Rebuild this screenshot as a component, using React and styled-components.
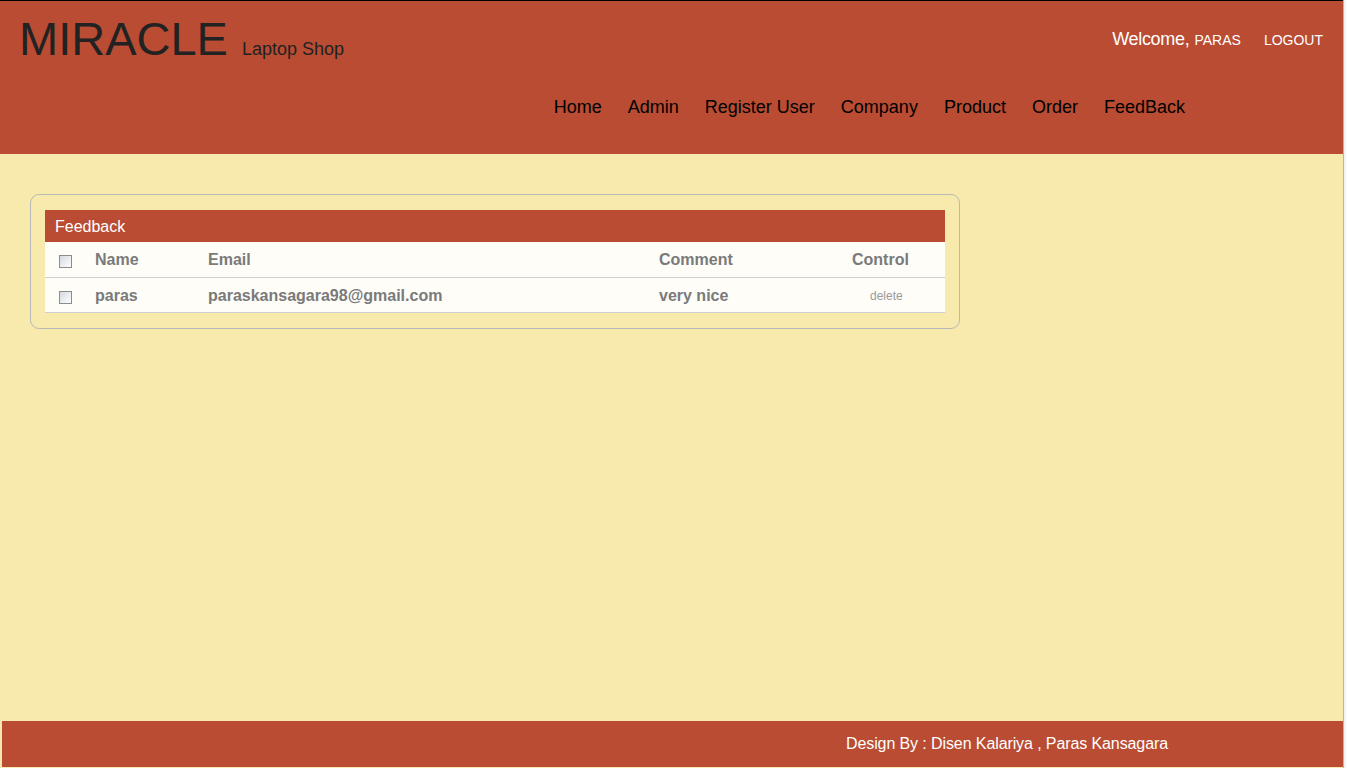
import React from 'react';
import styled, { createGlobalStyle } from 'styled-components';

const Global = createGlobalStyle`
  html, body { margin: 0; padding: 0; }
  body {
    background: #f8eaac;
    font-family: Arial, "Liberation Sans", sans-serif;
  }
`;

const feedback = [
  { name: 'paras', email: 'paraskansagara98@gmail.com', comment: 'very nice' },
];

const navItems = ['Home', 'Admin', 'Register User', 'Company', 'Product', 'Order', 'FeedBack'];

const App = () => {
  return (<>
    <Global />
    <Shell>
      <Page>
        <Header>
          <TopRow>
            <Brand>
              <Logo>MIRACLE</Logo>
              <Tagline>Laptop Shop</Tagline>
            </Brand>
            <UserBox>
              <Welcome>Welcome,</Welcome>
              <UserName>PARAS</UserName>
              <Logout href="#">LOGOUT</Logout>
            </UserBox>
          </TopRow>
          <Nav>
            {navItems.map((item) => <NavLink key={item} href="#">{item}</NavLink>)}
          </Nav>
        </Header>

        <Main>
          <Panel>
            <TitleBar>Feedback</TitleBar>
            <Row head>
              <Cell><Check type="checkbox" /></Cell>
              <Cell>Name</Cell>
              <Cell>Email</Cell>
              <Cell>Comment</Cell>
              <Cell>Control</Cell>
            </Row>
            {feedback.map((f) => (
              <Row key={f.email}>
                <Cell><Check type="checkbox" /></Cell>
                <Cell>{f.name}</Cell>
                <Cell>{f.email}</Cell>
                <Cell>{f.comment}</Cell>
                <Cell indent={18}><DeleteLink href="#">delete</DeleteLink></Cell>
              </Row>
            ))}
          </Panel>
        </Main>

        <Footer>Design By : Disen Kalariya , Paras Kansagara</Footer>
      </Page>
      <EdgeStrip />
    </Shell>
  </>);
};

const Shell = styled.div`
  display: flex;
  min-height: 768px;
`;
const Page = styled.div`
  flex: 1;
  display: flex;
  flex-direction: column;
`;
const EdgeStrip = styled.div`
  width: 2px;
  border-left: 1px solid #b5b5b5;
  background: #f2f2f2;
`;

const Header = styled.header`
  height: 153px;
  border-top: 1px solid #000;
  background: #b94c32;
  display: flex;
  flex-direction: column;
`;
const TopRow = styled.div`
  display: flex;
  justify-content: space-between;
  align-items: flex-start;
  padding: 0 20px 0 19px;
`;
const Brand = styled.div`
  display: flex;
  align-items: baseline;
`;
const Logo = styled.h1`
  margin: 0;
  font-size: 47px;
  font-weight: normal;
  line-height: 75px;
  color: #222;
`;
const Tagline = styled.span`
  margin-left: 14px;
  font-size: 18px;
  color: #222;
`;
const UserBox = styled.div`
  display: flex;
  align-items: baseline;
  padding-top: 28px;
  color: #fff;
`;
const Welcome = styled.span`
  font-size: 18px;
  letter-spacing: -0.3px;
`;
const UserName = styled.span`
  margin-left: 5px;
  font-size: 14px;
`;
const Logout = styled.a`
  margin-left: 23px;
  font-size: 14px;
  color: #fff;
  text-decoration: none;
`;

const Nav = styled.nav`
  display: flex;
  justify-content: flex-end;
  padding: 17px 145px 0 0;
`;
const NavLink = styled.a`
  padding: 0 13px;
  font-size: 18px;
  line-height: 28px;
  color: #000;
  text-decoration: none;
`;

const Main = styled.main`
  flex: 1;
  padding: 40px 0 0 30px;
`;
const Panel = styled.section`
  width: 900px;
  padding: 15px 14px;
  border: 1px solid #b9b9b9;
  border-radius: 9px;
`;
const TitleBar = styled.div`
  height: 32px;
  padding-left: 10px;
  background: #b94c32;
  color: #fff;
  font-size: 16px;
  line-height: 33px;
`;
const Row = styled.div`
  display: grid;
  grid-template-columns: 50px 113px 451px 193px 93px;
  align-items: center;
  height: ${(p) => (p.head ? '34px' : '33px')};
  padding-top: 1px;
  background: #fefdf8;
  border-bottom: 1px solid #cfcfcf;
  color: #7a7a7a;
  font-size: 16px;
  font-weight: bold;
`;
const Cell = styled.div`
  display: flex;
  align-items: center;
  padding-left: ${(p) => (p.indent || 0)}px;
  &:first-child { padding-left: 14px; }
`;
const Check = styled.input`
  appearance: none;
  margin: 3px 0 0 0;
  width: 13px;
  height: 13px;
  border: 1px solid #8c8c8c;
  background: linear-gradient(135deg, #d6d9de 0%, #eef0f2 60%, #fbfbfb 100%);
`;
const DeleteLink = styled.a`
  font-size: 12px;
  font-weight: normal;
  color: #999;
  text-decoration: none;
`;

const Footer = styled.footer`
  height: 46px;
  margin: 0 0 1px 2px;
  padding-left: 844px;
  background: #b94c32;
  color: #fff;
  font-size: 16px;
  letter-spacing: -0.1px;
  line-height: 46px;
`;

export default App;
